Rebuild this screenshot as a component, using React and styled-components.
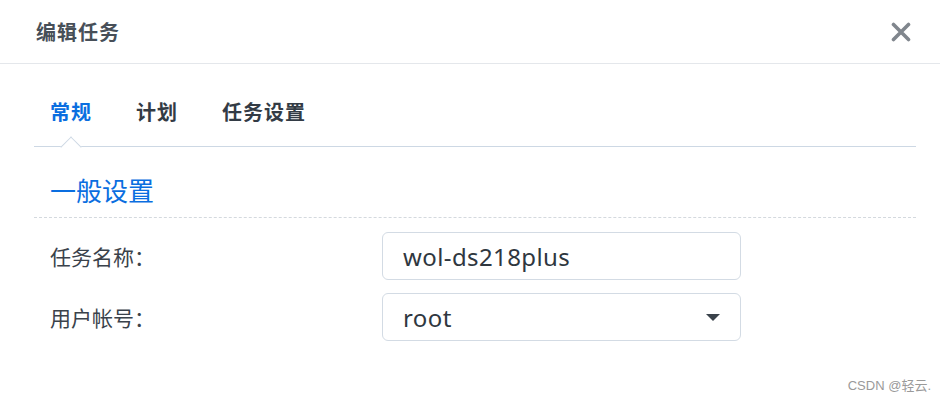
import React from "react";
import styled, { createGlobalStyle } from "styled-components";

const GlobalStyle = createGlobalStyle`
  html, body {
    margin: 0;
    padding: 0;
    background: #ffffff;
  }
  body {
    font-family: "Noto Sans", "Noto Sans CJK SC", sans-serif;
  }
`;

const Dialog = styled.div`
  width: 940px;
  height: 402px;
  background: #ffffff;
  position: relative;
  overflow: hidden;
`;

const Header = styled.div`
  height: 63px;
  display: flex;
  align-items: center;
  justify-content: space-between;
  padding: 0 28px 0 36px;
  border-bottom: 1px solid #e4e7eb;
`;

const Title = styled.h1`
  margin: 0;
  font-family: "Noto Sans CJK SC", sans-serif;
  font-size: 20px;
  font-weight: 700;
  color: #474f58;
  letter-spacing: 1px;
`;

const CloseButton = styled.button`
  border: none;
  background: none;
  padding: 0;
  width: 22px;
  height: 22px;
  display: flex;
  align-items: center;
  justify-content: center;
  cursor: pointer;
`;

const Body = styled.div`
  padding: 0 24px 0 34px;
`;

const TabBar = styled.div`
  display: flex;
  gap: 44px;
  padding: 0 16px;
  height: 82px;
  align-items: center;
  border-bottom: 1px solid #cdd8e4;
  position: relative;
`;

const Tab = styled.div`
  font-family: "Noto Sans CJK SC", sans-serif;
  font-size: 20px;
  font-weight: 700;
  letter-spacing: 1px;
  color: ${(p) => (p.$active ? "#0a6ee0" : "#333b45")};
  position: relative;
  height: 82px;
  display: flex;
  align-items: center;
  padding-top: 13px;
  box-sizing: border-box;
`;

const Notch = styled.span`
  position: absolute;
  left: 50%;
  bottom: -1px;
  width: 14px;
  height: 14px;
  transform: translate(-50%, 50%) rotate(45deg);
  background: #ffffff;
  border-left: 1px solid #cdd8e4;
  border-top: 1px solid #cdd8e4;
`;

const SectionTitle = styled.h2`
  margin: 0;
  padding: 14px 16px 0;
  height: 71px;
  display: flex;
  align-items: center;
  box-sizing: border-box;
  font-family: "Noto Sans CJK SC", sans-serif;
  font-size: 26px;
  font-weight: 400;
  color: #0a6ee0;
  border-bottom: 1px dashed #d4d9de;
`;

const Form = styled.div`
  display: flex;
  flex-direction: column;
  gap: 13px;
  padding: 14px 0 0 16px;
`;

const Row = styled.div`
  display: grid;
  grid-template-columns: 332px 359px;
  align-items: center;
`;

const Label = styled.label`
  font-family: "Noto Sans CJK SC", sans-serif;
  font-size: 21px;
  color: #3a424b;
`;

const Field = styled.div`
  height: 48px;
  box-sizing: border-box;
  border: 1px solid #d3dbe4;
  border-radius: 6px;
  display: flex;
  align-items: center;
  justify-content: space-between;
  padding: 0 20px 0 20px;
  font-family: "Noto Sans", sans-serif;
  font-size: 24px;
  letter-spacing: 0.4px;
  color: #2f3740;
`;

const Caret = styled.span`
  width: 0;
  height: 0;
  border-left: 7px solid transparent;
  border-right: 7px solid transparent;
  border-top: 7px solid #3a424b;
`;

const Watermark = styled.div`
  position: absolute;
  right: 9px;
  bottom: 8px;
  font-family: "Liberation Sans", "Noto Sans CJK SC", sans-serif;
  font-size: 13px;
  color: #9a9a9a;
`;

export default function App() {
  return (
    <>
      <GlobalStyle />
      <Dialog>
        <Header>
          <Title>编辑任务</Title>
          <CloseButton aria-label="close">
            <svg width="20" height="20" viewBox="0 0 20 20">
              <path
                d="M2.5 2.5 L17.5 17.5 M17.5 2.5 L2.5 17.5"
                stroke="#80868d"
                strokeWidth="3.6"
                strokeLinecap="round"
              />
            </svg>
          </CloseButton>
        </Header>
        <Body>
          <TabBar>
            <Tab $active>
              常规
              <Notch />
            </Tab>
            <Tab>计划</Tab>
            <Tab>任务设置</Tab>
          </TabBar>
          <SectionTitle>一般设置</SectionTitle>
          <Form>
            <Row>
              <Label>任务名称：</Label>
              <Field>wol-ds218plus</Field>
            </Row>
            <Row>
              <Label>用户帐号：</Label>
              <Field>
                root
                <Caret />
              </Field>
            </Row>
          </Form>
        </Body>
        <Watermark>CSDN @轻云.</Watermark>
      </Dialog>
    </>
  );
}
